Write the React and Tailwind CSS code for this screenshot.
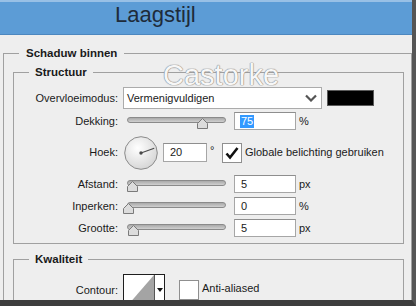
import React from 'react';

function Slider({ thumb }) {
  return (
    <div className="relative w-[107px] h-[18px] shrink-0">
      <div className="absolute left-[4px] right-[4px] top-[5px] h-[6px] rounded-full border border-[#8a8a8a] bg-gradient-to-b from-[#a9a9a9] to-[#d0d0d0]" />
      <svg className={`absolute top-[6px] ${thumb}`} width="11" height="11" viewBox="0 0 11 11">
        <polygon points="0.5,10.5 0.5,5.5 5.5,0.5 10.5,5.5 10.5,10.5" fill="#dcdcdc" stroke="#7a7a7a" />
      </svg>
    </div>
  );
}

function Field({ value, unit, selected }) {
  return (
    <>
      <div className="ml-[4px] w-[62px] h-[18px] shrink-0 bg-white border border-[#a6a6a6] border-t-[#8e8e8e] flex items-center pl-[5px]">
        {selected ? (
          <span className="bg-[#3399ff] text-white px-[1px] leading-[13px]">{value}</span>
        ) : (
          <span className="pl-[1px]">{value}</span>
        )}
      </div>
      <span className="ml-[3px]">{unit}</span>
    </>
  );
}

function Label({ children }) {
  return <span className="w-[105px] shrink-0 text-right pr-[1px]">{children}</span>;
}

function Checkbox({ checked }) {
  return (
    <div className="w-[20px] h-[20px] shrink-0 bg-white border border-[#8f8f8f] flex items-center justify-center">
      {checked && (
        <svg width="16" height="16" viewBox="0 0 16 16">
          <path d="M2.5 8.5 L6 12.5 L13.5 3" fill="none" stroke="#111" strokeWidth="2.6" />
        </svg>
      )}
    </div>
  );
}

export default function App() {
  return (
    <div className="relative w-[416px] h-[306px] overflow-hidden bg-[#eeeeee] border-r-[4px] border-b-[6px] border-r-[#555555] border-b-[#3d3d3d] font-['Liberation_Sans',Arial,sans-serif] text-[11px] text-[#1a1a1a]">
      {/* Title bar */}
      <div className="h-[35px] border-t-[2px] border-t-[#98c0e6] border-b border-b-[#4c87bf] bg-[#5c9cd6] pl-[115px] pt-[2px]">
        <span className="text-[22px] leading-none text-[#1e2b3a]">Laagstijl</span>
      </div>

      <fieldset className="mt-[10px] ml-[3px] border border-[#a0a0a0]">
        <legend className="ml-[15px] px-[7px] font-bold text-[11.5px] leading-[16px]">Schaduw binnen</legend>

        <fieldset className="mt-[3px] ml-[9px] mr-[7px] border border-[#a0a0a0] pt-[7px] pb-[6px]">
          <legend className="ml-[15px] px-[6px] font-bold text-[11.5px] leading-[16px]">Structuur</legend>

          <div className="flex flex-col gap-[4px]">
            <div className="flex items-center gap-[4px] h-[22px] -mb-[1px]">
              <Label>Overvloeimodus:</Label>
              <div className="w-[199px] h-[22px] bg-white border border-[#ababab] flex items-center justify-between pl-[3px] pr-[4px]">
                <span>Vermenigvuldigen</span>
                <svg width="12" height="8" viewBox="0 0 12 8">
                  <polyline points="1,1.5 6,6.5 11,1.5" fill="none" stroke="#555" strokeWidth="2.2" />
                </svg>
              </div>
              <div className="ml-[1px] w-[47px] h-[16px] bg-black border border-[#5a5a5a]" />
            </div>

            <div className="flex items-center h-[18px]">
              <Label>Dekking:</Label>
              <div className="ml-[4px] flex items-center">
                <Slider thumb="left-[74px]" />
                <Field value="75" unit="%" selected />
              </div>
            </div>

            <div className="flex items-center h-[37px]">
              <Label>Hoek:</Label>
              <svg className="ml-[5px] shrink-0" width="34" height="34" viewBox="0 0 34 34">
                <defs>
                  <radialGradient id="dialg" cx="40%" cy="35%" r="70%">
                    <stop offset="0" stopColor="#ffffff" />
                    <stop offset="1" stopColor="#d4d4d4" />
                  </radialGradient>
                </defs>
                <circle cx="17" cy="17" r="16.3" fill="url(#dialg)" stroke="#8a8a8a" />
                <line x1="17" y1="17" x2="30.2" y2="12.2" stroke="#4a4a4a" strokeWidth="1.1" />
                <circle cx="17" cy="17" r="1.7" fill="#4a4a4a" />
              </svg>
              <div className="ml-[5px] w-[44px] h-[19px] shrink-0 bg-white border border-[#a6a6a6] border-t-[#8e8e8e] flex items-center pl-[6px]">20</div>
              <span className="w-[15px] pl-[3px] self-start mt-[11px] leading-none">°</span>
              <Checkbox checked />
              <span className="ml-[3px]">Globale belichting gebruiken</span>
            </div>

            <div className="flex items-center h-[18px]">
              <Label>Afstand:</Label>
              <div className="ml-[4px] flex items-center">
                <Slider thumb="left-[4px]" />
                <Field value="5" unit="px" />
              </div>
            </div>

            <div className="flex items-center h-[18px]">
              <Label>Inperken:</Label>
              <div className="ml-[4px] flex items-center">
                <Slider thumb="left-[0px]" />
                <Field value="0" unit="%" />
              </div>
            </div>

            <div className="flex items-center h-[18px]">
              <Label>Grootte:</Label>
              <div className="ml-[4px] flex items-center">
                <Slider thumb="left-[5px]" />
                <Field value="5" unit="px" />
              </div>
            </div>
          </div>
        </fieldset>

        <fieldset className="mt-[7px] ml-[9px] mr-[7px] border border-[#a0a0a0] pt-[7px] pb-[8px]">
          <legend className="ml-[15px] px-[6px] font-bold text-[11.5px] leading-[16px]">Kwaliteit</legend>
          <div className="flex items-center h-[32px]">
            <Label>Contour:</Label>
            <div className="ml-[4px] w-[42px] h-[32px] shrink-0 border border-[#1e1e1e] bg-white flex">
              <svg width="30" height="30" viewBox="0 0 30 30" className="shrink-0">
                <polygon points="4,30 30,0 30,30" fill="#a4a4a4" />
              </svg>
              <div className="w-[10px] border-l border-[#555] flex items-center justify-center">
                <svg width="6" height="4" viewBox="0 0 6 4">
                  <polygon points="0,0 6,0 3,4" fill="#111" />
                </svg>
              </div>
            </div>
            <div className="ml-[14px]">
              <Checkbox />
            </div>
            <span className="ml-[3px] -mt-[3px]">Anti-aliased</span>
          </div>
        </fieldset>
      </fieldset>

      {/* watermark */}
      <span className="absolute left-[163px] top-[61px] text-[29px] leading-none text-[#f7f7f7] [text-shadow:0_0_1px_#8a8a8a,0_0_1px_#8a8a8a,0_0_1px_#8a8a8a]">
        Castorke
      </span>
    </div>
  );
}
